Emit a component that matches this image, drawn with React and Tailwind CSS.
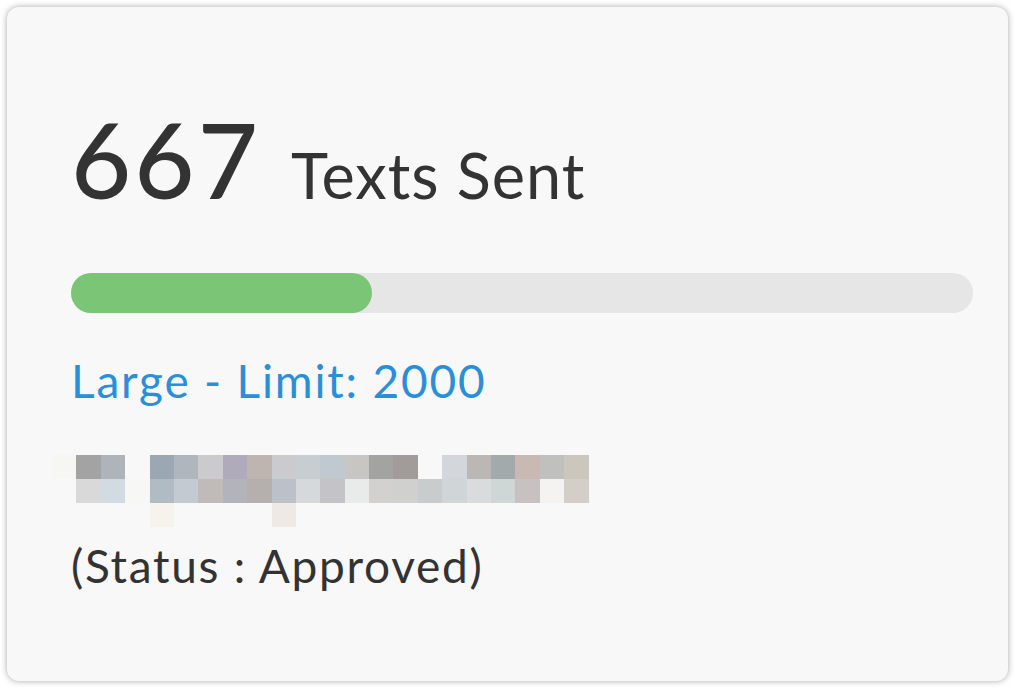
import React from "react";

const pixelRows = [
  [
    "bg-[#f6f6f3]", "bg-[#a3a3a3]", "bg-[#aeb4ba]", "bg-transparent", "bg-[#9ba7b3]", "bg-[#b0b6bd]",
    "bg-[#cbcbcd]", "bg-[#afabbb]", "bg-[#bfb5b0]", "bg-[#cbcbcd]", "bg-[#c8cdd1]", "bg-[#c0c8d0]",
    "bg-[#c8c6c2]", "bg-[#a3a3a1]", "bg-[#a19c99]", "bg-transparent", "bg-[#d3d6da]", "bg-[#bab7b4]",
    "bg-[#a2aaab]", "bg-[#c8bab3]", "bg-[#c0c0be]", "bg-[#cbc7bd]",
  ],
  [
    "bg-transparent", "bg-[#d9d9d9]", "bg-[#d3dbe2]", "bg-[#f7f7f5]", "bg-[#b0bbc4]", "bg-[#c4cad1]",
    "bg-[#c0bbb8]", "bg-[#b3b3bc]", "bg-[#b5b0ad]", "bg-[#bcc1c9]", "bg-[#d5d9dc]", "bg-[#c4c3c7]",
    "bg-[#e9ebea]", "bg-[#d2d1cf]", "bg-[#d0d0ce]", "bg-[#c9cccc]", "bg-[#d0d5d8]", "bg-[#dadbdd]",
    "bg-[#cfd6d6]", "bg-[#c8c1c2]", "bg-[#f4f3f1]", "bg-[#d3cfc8]",
  ],
  [
    "bg-transparent", "bg-transparent", "bg-transparent", "bg-transparent", "bg-[#f5f3eb]", "bg-transparent",
    "bg-transparent", "bg-transparent", "bg-transparent", "bg-[#eee9e5]", "bg-transparent", "bg-transparent",
    "bg-transparent", "bg-transparent", "bg-transparent", "bg-transparent", "bg-transparent", "bg-transparent",
    "bg-transparent", "bg-transparent", "bg-transparent", "bg-transparent",
  ],
];

const UsageCard = () => {
  const sent = 667;
  const limit = 2000;
  const percent = (sent / limit) * 100;

  return (
    <div className="rounded-[12px] bg-[#f8f8f8] shadow-[0_0_6px_rgba(0,0,0,0.35)] h-[674px] pl-[64px] pr-[35px] pt-[100px] text-[#333333]">
      {/* Count heading */}
      <div className="flex items-baseline h-[118px]">
        <span className="text-[104px] font-medium leading-none tracking-[3px]">{sent}</span>
        <span className="ml-[30px] text-[63px] leading-none tracking-[1px]">Texts Sent</span>
      </div>

      {/* Progress bar */}
      <div className="mt-[48px] h-[40px] rounded-full bg-[#e6e6e6]">
        <div className="h-full rounded-full bg-[#7bc576]" style={{ width: `${percent}%` }} />
      </div>

      {/* Plan */}
      <div className="mt-[45px] text-[46px] leading-none tracking-[1.8px] text-[#2b8fd8]">Large - Limit: {limit}</div>

      {/* Blurred name */}
      <div className="mt-[51px] -ml-[19px] grid grid-cols-[repeat(22,24.4px)] grid-rows-[repeat(3,24px)]">
        {pixelRows.map((row, r) =>
          row.map((cls, c) => <div key={`${r}-${c}`} className={cls} />)
        )}
      </div>

      {/* Status */}
      <div className="mt-[16px] text-[46px] leading-none tracking-[1.7px]">(Status : Approved)</div>
    </div>
  );
};

export default function App() {
  return (
    <div className="w-[1015px] h-[688px] bg-white p-[7px] font-['Lato',sans-serif]">
      <UsageCard />
    </div>
  );
}
